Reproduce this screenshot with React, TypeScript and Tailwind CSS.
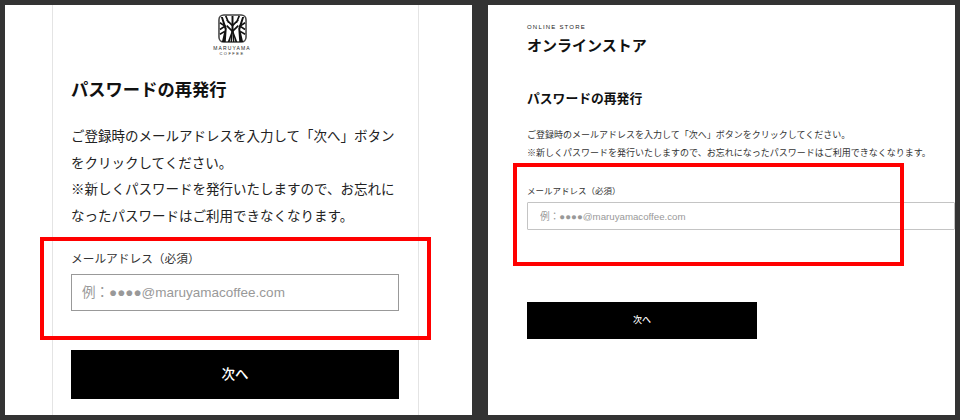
import React from 'react';

function Logo() {
  return (
    <svg width="29" height="29" viewBox="0 0 30 30" fill="none" stroke="#111" strokeLinecap="butt">
      <rect x="1" y="1" width="28" height="28" rx="5" stroke="#444" strokeWidth="1.6" />
      <g fill="#111" stroke="none">
        <path d="M4 29L7 16L3 3H5L9 15L8 29Z" />
        <path d="M26 29L23 16L27 3H25L21 15L22 29Z" />
        <path d="M13 29L14 14V2H16V14L17 29H15.5L15 19L14.5 29Z" />
        <path d="M10 29L14 18L14.6 20L12 29Z" />
        <path d="M20 29L16 18L15.4 20L18 29Z" />
      </g>
      <g strokeWidth="1.7">
        <path d="M2 9L8 13M2 16L8 12M2 21L7 18" />
        <path d="M28 9L22 13M28 16L22 12M28 21L23 18" />
        <path d="M8 2L11 9M22 2L19 9M15 12L9 6M15 12L21 6" />
        <path d="M15 18L9 12M15 18L21 12" />
      </g>
    </svg>
  );
}

export default function App() {
  return (
    <div className="relative flex h-[420px] w-[960px] gap-[16px] overflow-hidden bg-[#333333] p-[5px] font-['Liberation_Sans','Noto_Sans_CJK_JP',sans-serif]">
      {/* スマホ表示 */}
      <section className="h-[410px] w-[467px] overflow-hidden bg-white pl-[47px]">
        <div className="h-full w-[367px] border-x border-[#e4e4e4] px-[18px]">
          <div className="flex flex-col items-center pt-[9px] pr-[7px]">
            <Logo />
            <p className="mt-[2px] text-[5px] leading-[6px] tracking-[1.1px] whitespace-nowrap text-[#222]">MARUYAMA</p>
            <p className="text-[4px] leading-[6px] tracking-[1.5px] text-[#222]">COFFEE</p>
          </div>
          <h2 className="mt-[20px] text-[17.3px] leading-[26px] font-bold text-[#111]">パスワードの再発行</h2>
          <p className="mt-[21px] text-[13.5px] leading-[26.6px] text-[#222]">
            ご登録時のメールアドレスを入力して「次へ」ボタンをクリックしてください。
            <br />
            ※新しくパスワードを発行いたしますので、お忘れになったパスワードはご利用できなくなります。
          </p>
          <label className="mt-[20px] block text-[11.7px] leading-[18px] text-[#333]">メールアドレス（必須）</label>
          <input
            readOnly
            placeholder="例：●●●●@maruyamacoffee.com"
            className="mt-[6px] block h-[37px] w-[328px] border border-[#999] px-[10px] text-[13.5px] outline-none placeholder:text-[#999]"
          />
          <button className="mt-[39px] block h-[49px] w-[328px] bg-black text-[13.5px] font-medium text-white">次へ</button>
        </div>
      </section>

      {/* PC表示 */}
      <section className="h-[410px] w-[467px] overflow-hidden bg-white pt-[18px] pl-[39px]">
        <p className="text-[6px] leading-[8px] tracking-[1.2px] text-[#222]">ONLINE STORE</p>
        <h1 className="mt-[3px] text-[15px] leading-[24px] font-bold text-[#111]">オンラインストア</h1>
        <h2 className="mt-[31px] text-[12.8px] leading-[20px] font-bold text-[#111]">パスワードの再発行</h2>
        <p className="mt-[17px] text-[9px] leading-[18px] whitespace-nowrap text-[#333]">
          ご登録時のメールアドレスを入力して「次へ」ボタンをクリックしてください。
          <br />
          ※新しくパスワードを発行いたしますので、お忘れになったパスワードはご利用できなくなります。
        </p>
        <label className="mt-[23px] block text-[8.5px] leading-[12px] text-[#333]">メールアドレス（必須）</label>
        <input
          readOnly
          placeholder="例：●●●●@maruyamacoffee.com"
          className="mt-[5px] block h-[28px] w-[428px] rounded-[1px] border border-[#c4c4c4] px-[12px] text-[9.7px] outline-none placeholder:text-[#999]"
        />
        <button className="mt-[72px] block h-[37px] w-[230px] bg-black text-[9px] font-medium text-white">次へ</button>
      </section>

      {/* 赤枠 */}
      <div className="absolute top-[237px] left-[40px] h-[103px] w-[391px] border-4 border-[#ff0000]" />
      <div className="absolute top-[163px] left-[513px] h-[103px] w-[391px] border-4 border-[#ff0000]" />
    </div>
  );
}
